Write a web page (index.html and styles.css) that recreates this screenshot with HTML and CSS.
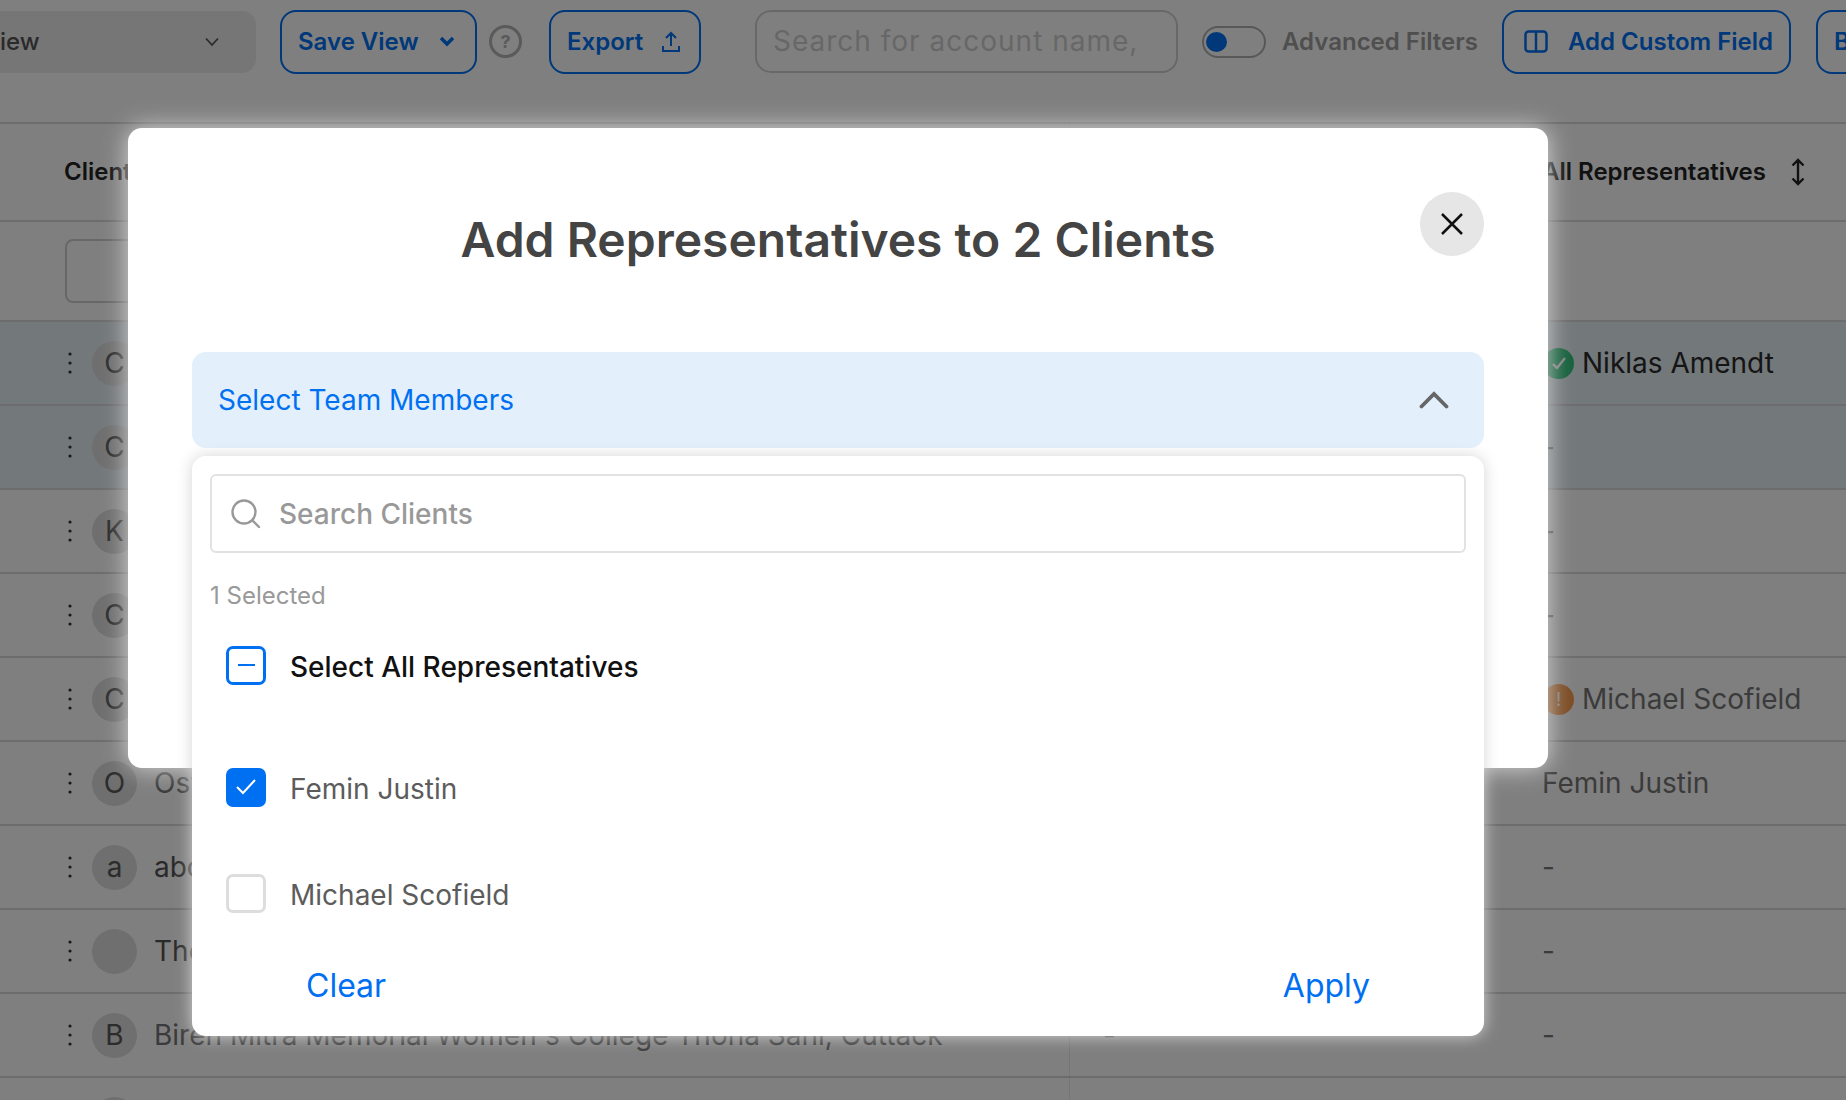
FILE: index.html
```html
<!DOCTYPE html>
<html lang="en">
<head>
<meta charset="utf-8">
<title>Add Representatives</title>
<link rel="stylesheet" href="styles.css">
</head>
<body>
<div class="page">
  <header class="toolbar">
    <div class="view-select"><span>View</span>
      <svg class="ic-sel" width="16" height="10" viewBox="0 0 16 10"><path d="M2 1.500L8 8L14 1.500" fill="none" stroke="#555" stroke-width="1.800"/></svg>
    </div>
    <button class="btn save-view">Save View
      <svg width="16" height="11" viewBox="0 0 16 11"><path d="M2 2L8 8L14 2" fill="none" stroke="#0070f3" stroke-width="3.500"/></svg>
    </button>
    <span class="help">?</span>
    <button class="btn export">Export
      <svg width="20" height="22" viewBox="0 0 20 22"><path d="M10 15V2M5 7L10 2L15 7M2 15V20H18V15" fill="none" stroke="#0070f3" stroke-width="2"/></svg>
    </button>
    <div class="search-main">Search for account name,</div>
    <span class="toggle"><i class="knob"></i></span>
    <span class="adv">Advanced Filters</span>
    <button class="btn add-field">
      <svg width="24" height="23" viewBox="0 0 24 23"><rect x="1.500" y="1.500" width="21" height="20" rx="3" fill="none" stroke="#0070f3" stroke-width="2.500"/><path d="M12 2V21" stroke="#0070f3" stroke-width="2.500"/></svg>
      Add Custom Field
    </button>
    <button class="btn next-btn">Bulk</button>
  </header>

  <div class="table">
    <div class="row head">
      <div class="cell first"><span class="head-label">Client Name</span></div>
      <div class="cell mid"></div>
      <div class="cell last head-rep"><span class="head-label">All Representatives</span>
        <svg width="16" height="28" viewBox="0 0 16 28"><path d="M8 2V26M2.500 7.500L8 2L13.500 7.500M2.500 20.500L8 26L13.500 20.500" fill="none" stroke="#222" stroke-width="2.400"/></svg>
      </div>
    </div>
    <div class="row filter">
      <div class="cell first"><div class="filter-box"></div></div>
      <div class="cell mid"></div>
      <div class="cell last"></div>
    </div>

    <div class="row selected">
      <div class="cell first"><svg class="dots" width="4" height="22" viewBox="0 0 4 22"><circle cx="2" cy="2" r="1.600"/><circle cx="2" cy="11" r="1.600"/><circle cx="2" cy="20" r="1.600"/></svg><span class="avatar">C</span><span class="name">Central Academy</span></div>
      <div class="cell mid"></div>
      <div class="cell last strong"><span class="badge ok"><svg width="18" height="16" viewBox="0 0 18 16"><path d="M3 9L7 13L15 3" fill="none" stroke="#fff" stroke-width="2.400"/></svg></span>Niklas Amendt</div>
    </div>
    <div class="row selected">
      <div class="cell first"><svg class="dots" width="4" height="22" viewBox="0 0 4 22"><circle cx="2" cy="2" r="1.600"/><circle cx="2" cy="11" r="1.600"/><circle cx="2" cy="20" r="1.600"/></svg><span class="avatar">C</span><span class="name">City College</span></div>
      <div class="cell mid"></div>
      <div class="cell last">-</div>
    </div>
    <div class="row">
      <div class="cell first"><svg class="dots" width="4" height="22" viewBox="0 0 4 22"><circle cx="2" cy="2" r="1.600"/><circle cx="2" cy="11" r="1.600"/><circle cx="2" cy="20" r="1.600"/></svg><span class="avatar">K</span><span class="name">Kendriya School</span></div>
      <div class="cell mid"></div>
      <div class="cell last">-</div>
    </div>
    <div class="row">
      <div class="cell first"><svg class="dots" width="4" height="22" viewBox="0 0 4 22"><circle cx="2" cy="2" r="1.600"/><circle cx="2" cy="11" r="1.600"/><circle cx="2" cy="20" r="1.600"/></svg><span class="avatar">C</span><span class="name">Columbia Institute</span></div>
      <div class="cell mid"></div>
      <div class="cell last">-</div>
    </div>
    <div class="row">
      <div class="cell first"><svg class="dots" width="4" height="22" viewBox="0 0 4 22"><circle cx="2" cy="2" r="1.600"/><circle cx="2" cy="11" r="1.600"/><circle cx="2" cy="20" r="1.600"/></svg><span class="avatar">C</span><span class="name">Carmel College</span></div>
      <div class="cell mid"></div>
      <div class="cell last"><span class="badge warn">!</span>Michael Scofield</div>
    </div>
    <div class="row">
      <div class="cell first"><svg class="dots" width="4" height="22" viewBox="0 0 4 22"><circle cx="2" cy="2" r="1.600"/><circle cx="2" cy="11" r="1.600"/><circle cx="2" cy="20" r="1.600"/></svg><span class="avatar">O</span><span class="name">Oswal College</span></div>
      <div class="cell mid"></div>
      <div class="cell last">Femin Justin</div>
    </div>
    <div class="row">
      <div class="cell first"><svg class="dots" width="4" height="22" viewBox="0 0 4 22"><circle cx="2" cy="2" r="1.600"/><circle cx="2" cy="11" r="1.600"/><circle cx="2" cy="20" r="1.600"/></svg><span class="avatar">a</span><span class="name dark">abc college</span></div>
      <div class="cell mid"></div>
      <div class="cell last">-</div>
    </div>
    <div class="row">
      <div class="cell first"><svg class="dots" width="4" height="22" viewBox="0 0 4 22"><circle cx="2" cy="2" r="1.600"/><circle cx="2" cy="11" r="1.600"/><circle cx="2" cy="20" r="1.600"/></svg><span class="avatar"></span><span class="name dark">The Academy</span></div>
      <div class="cell mid"></div>
      <div class="cell last">-</div>
    </div>
    <div class="row">
      <div class="cell first"><svg class="dots" width="4" height="22" viewBox="0 0 4 22"><circle cx="2" cy="2" r="1.600"/><circle cx="2" cy="11" r="1.600"/><circle cx="2" cy="20" r="1.600"/></svg><span class="avatar">B</span><span class="name">Biren Mitra Memorial Women's College Thona Sani, Cuttack</span></div>
      <div class="cell mid">-</div>
      <div class="cell last">-</div>
    </div>
    <div class="row">
      <div class="cell first"><svg class="dots" width="4" height="22" viewBox="0 0 4 22"><circle cx="2" cy="2" r="1.600"/><circle cx="2" cy="11" r="1.600"/><circle cx="2" cy="20" r="1.600"/></svg><span class="avatar"></span></div>
      <div class="cell mid"></div>
      <div class="cell last"></div>
    </div>
  </div>
</div>

<div class="overlay">
  <section class="modal">
    <div class="modal-head">
      <h1 class="modal-title">Add Representatives to 2 Clients</h1>
      <button class="close" aria-label="Close">
        <svg width="24" height="24" viewBox="0 0 24 24"><path d="M2 2L22 22M22 2L2 22" fill="none" stroke="#111" stroke-width="2.500"/></svg>
      </button>
    </div>
    <div class="picker">
      <div class="trigger">
        <span>Select Team Members</span>
        <svg width="30" height="18" viewBox="0 0 30 18"><path d="M2.500 15.500L15 3L27.500 15.500" fill="none" stroke="#666" stroke-width="3.800" stroke-linecap="round"/></svg>
      </div>
      <div class="panel">
        <div class="panel-search">
          <svg width="31" height="31" viewBox="0 0 31 31"><circle cx="14" cy="14" r="11.500" fill="none" stroke="#999" stroke-width="2.400"/><path d="M22.500 22.500L29 29" stroke="#999" stroke-width="2.400" stroke-linecap="round"/></svg>
          <span>Search Clients</span>
        </div>
        <div class="count">1 Selected</div>
        <div class="opt opt-all">
          <span class="box mixed"><i></i></span>
          <span class="opt-label">Select All Representatives</span>
        </div>
        <div class="opt opt-femin">
          <span class="box checked"><svg width="22" height="18" viewBox="0 0 22 18"><path d="M2 9L8 15L20 2" fill="none" stroke="#fff" stroke-width="2"/></svg></span>
          <span class="opt-label">Femin Justin</span>
        </div>
        <div class="opt opt-michael">
          <span class="box"></span>
          <span class="opt-label">Michael Scofield</span>
        </div>
        <div class="actions">
          <span>Clear</span>
          <span>Apply</span>
        </div>
      </div>
    </div>
  </section>
</div>
</body>
</html>
```

FILE: styles.css
```css
* { box-sizing: border-box; }
html, body { margin: 0; padding: 0; }
body {
  width: 1846px;
  height: 1100px;
  overflow: hidden;
  background: #fff;
  font-family: Inter, "Liberation Sans", sans-serif;
  color: #777;
  position: relative;
}
.page { width: 1846px; height: 1100px; overflow: hidden; }

/* Toolbar */
.toolbar {
  display: flex;
  align-items: center;
  height: 122px;
  padding-top: 10px;
  padding-bottom: 49px;
  white-space: nowrap;
}
.toolbar > * { flex: none; }
.view-select {
  width: 296px;
  height: 62px;
  margin-left: -40px;
  padding: 0 36px 0 23px;
  background: #ececec;
  border-radius: 14px;
  display: flex;
  align-items: center;
  justify-content: space-between;
  font-size: 24px;
  font-weight: 500;
  color: #555;
}
.btn {
  height: 64px;
  border: 2px solid #0070f3;
  border-radius: 16px;
  background: #fff;
  color: #0070f3;
  font: 600 24px Inter, sans-serif;
  display: flex;
  align-items: center;
  padding: 0;
}
.save-view { width: 197px; margin-left: 24px; padding-left: 16px; gap: 20px; }
.help {
  width: 33px;
  height: 33px;
  margin-left: 12px;
  border: 3px solid #b4b4b4;
  border-radius: 50%;
  display: flex;
  align-items: center;
  justify-content: center;
  font-size: 18px;
  font-weight: 700;
  color: #b4b4b4;
}
.export { width: 152px; margin-left: 27px; padding-left: 16px; gap: 18px; }
.search-main {
  width: 423px;
  height: 63px;
  margin-left: 54px;
  padding-left: 16px;
  border: 2px solid #d0d0d0;
  border-radius: 16px;
  display: flex;
  align-items: center;
  font-size: 28px;
  letter-spacing: 1px;
  line-height: 34px;
  padding-bottom: 2px;
  color: #cfcfcf;
}
.toggle {
  width: 64px;
  height: 32px;
  margin-left: 24px;
  border: 2px solid #b0b0b0;
  border-radius: 16px;
  display: flex;
  align-items: center;
  padding-left: 2px;
}
.knob { width: 21px; height: 20px; border-radius: 50%; background: #0070f3; }
.adv { margin-left: 16px; width: 195px; font-size: 24px; font-weight: 600; color: #9e9e9e; }
.add-field { width: 289px; margin-left: 25px; padding-left: 20px; gap: 20px; }
.next-btn { width: 120px; margin-left: 25px; padding-left: 16px; }

/* Table */
.table { width: 1846px; }
.row {
  display: grid;
  grid-template-columns: 1069px 473px 1fr;
  height: 84px;
  border-bottom: 2px solid #d8d8d8;
  font-size: 28px;
}
.row.head { height: 100px; border-top: 2px solid #d8d8d8; }
.row.filter { height: 100px; }
.row.selected { background: #e6f0f6; }
.cell { display: flex; align-items: center; min-width: 0; white-space: nowrap; }
.first { padding-left: 68px; }
.mid { padding-left: 33px; border-left: 1px solid #ececec; }
.head-label { font-size: 24px; font-weight: 600; color: #222; padding-bottom: 1px; }
.head .first { padding-left: 64px; }
.head-rep { gap: 24px; }
.filter-box {
  width: 400px;
  height: 64px;
  margin-left: -3px;
  border: 2px solid #cfcfcf;
  border-radius: 8px;
}
.dots { fill: #333; margin-right: 20px; }
.avatar {
  width: 45px;
  height: 45px;
  border-radius: 50%;
  background: #dedede;
  display: flex;
  align-items: center;
  justify-content: center;
  color: #585858;
  font-size: 28px;
  flex: none;
}
.name { margin-left: 17px; color: #777; }
.name.dark { color: #555; }
.selected .name, .strong { color: #2a2a2a; }
.badge {
  width: 31px;
  height: 31px;
  margin-left: 1px;
  margin-right: 8px;
  border-radius: 50%;
  display: flex;
  align-items: center;
  justify-content: center;
  flex: none;
  color: #fff;
  font-size: 18px;
}
.badge.ok { background: #2fc27a; }
.badge.warn { background: #f99a4a; }

/* Modal */
.overlay {
  position: absolute;
  inset: 0;
  background: rgba(0, 0, 0, 0.5);
}
.modal {
  position: absolute;
  left: 128px;
  top: 128px;
  width: 1420px;
  height: 640px;
  padding: 64px 64px 0;
  background: #fff;
  border-radius: 14px;
  box-shadow: 0 0 24px #d8d8d8;
}
.modal-head { position: relative; height: 160px; }
.modal-title {
  margin: 0;
  padding-top: 19px;
  line-height: 58px;
  text-align: center;
  font-size: 48px;
  font-weight: 600;
  color: #444;
}
.close {
  position: absolute;
  right: 0;
  top: 0;
  width: 64px;
  height: 64px;
  padding: 0;
  border: 0;
  border-radius: 50%;
  background: #e6e6e6;
  display: flex;
  align-items: center;
  justify-content: center;
}
.picker { position: relative; }
.trigger {
  height: 96px;
  padding: 0 35px 0 26px;
  background: #e3f0fc;
  border-radius: 14px;
  display: flex;
  align-items: center;
  justify-content: space-between;
  font-size: 28px;
  color: #0070f3;
}
.panel {
  position: absolute;
  left: 0;
  right: 0;
  top: 104px;
  height: 580px;
  padding: 18px 18px 0;
  background: #fff;
  border-radius: 14px;
  box-shadow: 0 0 16px #d4d4d4;
}
.panel-search {
  height: 79px;
  padding: 0 18px;
  border: 2px solid #e2e2e2;
  border-radius: 6px;
  display: flex;
  align-items: center;
  gap: 18px;
  font-size: 28px;
  font-weight: 500;
  color: #999;
}
.count {
  margin-top: 29px;
  line-height: 28px;
  font-size: 24px;
  color: #999;
}
.opt {
  display: flex;
  align-items: center;
  gap: 24px;
  padding-left: 16px;
  height: 40px;
  font-size: 28px;
  color: #5c5c5c;
}
.opt-label { padding-top: 2px; }
.opt-all { margin-top: 36px; font-weight: 500; color: #111; }
.opt-femin { margin-top: 82px; }
.opt-michael { margin-top: 66px; }
.box {
  width: 40px;
  height: 39px;
  margin-top: -2px;
  border: 3px solid #ddd;
  border-radius: 7px;
  display: flex;
  align-items: center;
  justify-content: center;
  flex: none;
}
.box.mixed { border-color: #0070f3; }
.box.mixed i { width: 17px; height: 2.500px; background: #0070f3; }
.box.checked { background: #0070f3; border-color: #0070f3; }
.actions {
  display: flex;
  justify-content: space-between;
  margin-top: 52px;
  padding: 0 96px;
  line-height: 40px;
  font-size: 32px;
  color: #0070f3;
}
```
